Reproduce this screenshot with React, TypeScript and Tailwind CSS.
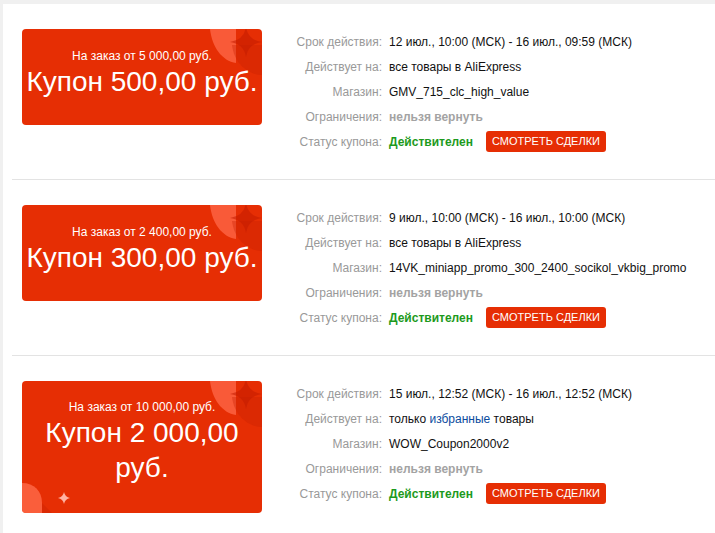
import React from "react"

type Coupon = {
  min: string
  title: string
  from: string
  scope: React.ReactNode
  shop: string
  tall?: boolean
}

const coupons: Coupon[] = [
  {
    min: "На заказ от 5 000,00 руб.",
    title: "Купон 500,00 руб.",
    from: "12 июл., 10:00 (МСК) - 16 июл., 09:59 (МСК)",
    scope: "все товары в AliExpress",
    shop: "GMV_715_clc_high_value",
  },
  {
    min: "На заказ от 2 400,00 руб.",
    title: "Купон 300,00 руб.",
    from: "9 июл., 10:00 (МСК) - 16 июл., 10:00 (МСК)",
    scope: "все товары в AliExpress",
    shop: "14VK_miniapp_promo_300_2400_socikol_vkbig_promo",
  },
  {
    min: "На заказ от 10 000,00 руб.",
    title: "Купон 2 000,00 руб.",
    from: "15 июл., 12:52 (МСК) - 16 июл., 12:52 (МСК)",
    scope: (
      <span>
        {"только "}
        <span className="text-[#0b4b9e]">{"избранные"}</span>
        {" товары"}
      </span>
    ),
    shop: "WOW_Coupon2000v2",
    tall: true,
  },
]

const CornerDeco = () => (
  <svg className="absolute right-0 top-0" width="52" height="50" viewBox="0 0 52 50">
    <path d="M0 0 H26 V34 C12 32 2 18 0 0 Z" fill="#ff6a4a" opacity="0.75" />
    <path d="M22 16 H52 V46 C38 46 24 34 22 16 Z" fill="#c51f02" opacity="0.35" />
    <path d="M36 -2 Q38 11 52 13 Q38 15 36 28 Q34 15 20 13 Q34 11 36 -2 Z" fill="#c21c00" opacity="0.55" />
  </svg>
)

const BottomDeco = () => (
  <svg className="absolute left-0 bottom-0" width="60" height="40" viewBox="0 0 60 40">
    <path d="M0 10 C12 10 20 18 20 30 V40 H0 Z" fill="#ff6a4a" opacity="0.8" />
    <path d="M20 30 L30 40 H20 Z" fill="#c51f02" opacity="0.35" />
    <path d="M42 19 Q43 24 48 25 Q43 26 42 31 Q41 26 36 25 Q41 24 42 19 Z" fill="#ffb3a3" />
  </svg>
)

const Row = ({ label, children }: { label: string; children: React.ReactNode }) => (
  <div className="flex items-center h-[25px]">
    <div className="w-[110px] text-right text-[#999999] shrink-0">{label}</div>
    <div className="ml-[7px] flex items-center whitespace-nowrap">{children}</div>
  </div>
)

const CouponRow = ({ c, last }: { c: Coupon; last: boolean }) => (
  <div className={"ml-[9px] pl-[10px] pt-[25px] pb-[25px] flex items-start " + (last ? "" : "border-b border-[#e3e3e3]")}>
    <div
      className={
        "relative overflow-hidden w-[240px] shrink-0 rounded-[4px] bg-[#e62e04] text-white flex flex-col items-center justify-center text-center px-[2px] " +
        (c.tall ? "h-[132px] pb-[10px]" : "h-[96px] pb-[8px]")
      }
    >
      <CornerDeco />
      {c.tall && <BottomDeco />}
      <p className="relative text-[12px] leading-[16px]">{c.min}</p>
      <p className="relative text-[28px] leading-[35px]">{c.title}</p>
    </div>
    <div className="ml-[10px] text-[12px] text-[#111111]">
      <Row label="Срок действия:">{c.from}</Row>
      <Row label="Действует на:">{c.scope}</Row>
      <Row label="Магазин:">{c.shop}</Row>
      <Row label="Ограничения:">
        <span className="font-bold text-[#a3a3a3]">{"нельзя вернуть"}</span>
      </Row>
      <Row label="Статус купона:">
        <span className="font-bold text-[#1d9a1d]">{"Действителен"}</span>
        <button className="ml-[13px] h-[21px] px-[6px] rounded-[3px] bg-[#e62e04] text-white text-[11px] uppercase">
          {"Смотреть сделки"}
        </button>
      </Row>
    </div>
  </div>
)

export default function App() {
  return (
    <div className="w-[715px] h-[533px] overflow-hidden bg-[#f0f0f0] pt-[4px] pl-[3px] font-['Liberation_Sans',Arial,sans-serif]">
      <div className="bg-white h-full">
        {coupons.map((c, i) => (
          <CouponRow key={i} c={c} last={i === coupons.length - 1} />
        ))}
      </div>
    </div>
  )
}
